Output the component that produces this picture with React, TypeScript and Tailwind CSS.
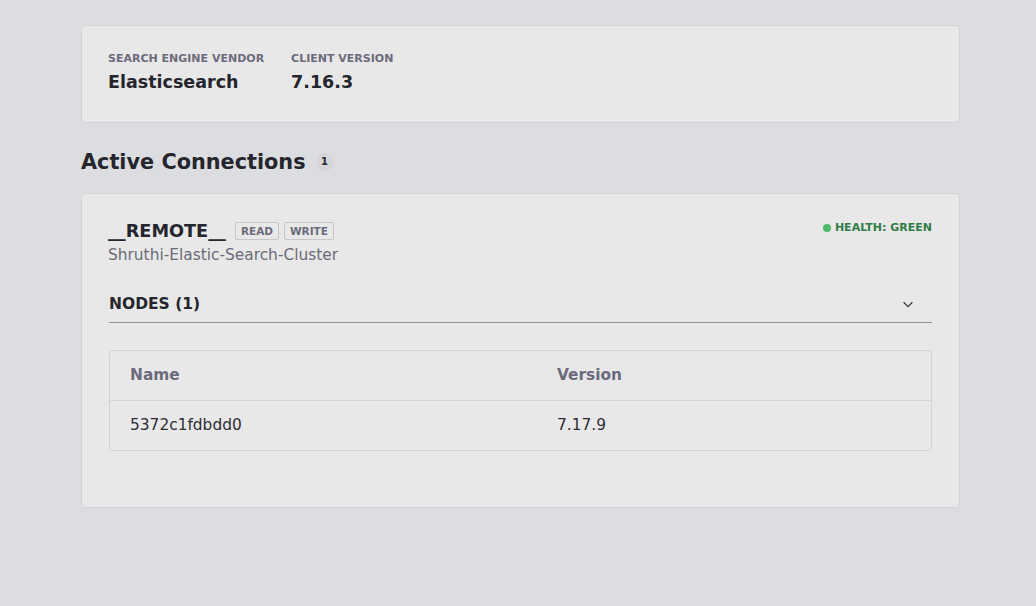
import React from "react";

export default function App() {
  return (
    <div
      className="min-h-[606px] w-full bg-[#dcdde0] text-[#25252d]"
      style={{ fontFamily: '"DejaVu Sans", "Liberation Sans", sans-serif' }}
    >
      <div className="ml-[81px] w-[879px] pt-[25px]">
        <div className="rounded border border-[#d3d3d6] bg-[#e8e8e8] px-[26px] pt-[26px] pb-[28px]">
          <div className="flex gap-[27px]">
            <div>
              <div className="text-[11px] font-bold uppercase leading-[14px] text-[#6b6b7c]">Search Engine Vendor</div>
              <div className="mt-[4px] text-[17.5px] font-bold leading-[24px]">Elasticsearch</div>
            </div>
            <div>
              <div className="text-[11px] font-bold uppercase leading-[14px] text-[#6b6b7c]">Client Version</div>
              <div className="mt-[4px] text-[17.5px] font-bold leading-[24px]">7.16.3</div>
            </div>
          </div>
        </div>

        <div className="mt-[25px] flex items-center gap-[10px]">
          <h2 className="text-[20.8px] font-bold leading-[28px]">Active Connections</h2>
          <span className="flex h-[18px] min-w-[18px] items-center justify-center rounded-full bg-[#d6d6da] px-[5px] text-[10px] font-bold leading-none">1</span>
        </div>

        <div className="mt-[17px] rounded border border-[#d3d3d6] bg-[#e8e8e8] pl-[27px] pr-[27px] pt-[25px] pb-[56px]">
          <div className="flex items-start justify-between">
            <div className="-ml-[1px]">
              <div className="flex items-center gap-[9px]">
                <span className="text-[17.7px] font-bold leading-[24px]">__REMOTE__</span>
                <div className="flex gap-[5px]">
                  <span className="rounded-[2px] border border-[#c5c5cb] px-[5px] py-[1px] text-[10.5px] font-bold leading-[14px] text-[#6b6b7c]">READ</span>
                  <span className="rounded-[2px] border border-[#c5c5cb] px-[5px] py-[1px] text-[10.5px] font-bold leading-[14px] text-[#6b6b7c]">WRITE</span>
                </div>
              </div>
              <div className="mt-[2px] text-[15.4px] leading-[20px] text-[#6b6b78]">Shruthi-Elastic-Search-Cluster</div>
            </div>
            <div className="mt-[2px] flex items-center gap-[4px]">
              <span className="h-[8px] w-[8px] rounded-full bg-[#4cbb6c]"></span>
              <span className="text-[11px] font-bold leading-[14px] text-[#2e7d46]">HEALTH: GREEN</span>
            </div>
          </div>

          <div className="mt-[29px] flex items-center justify-between border-b border-[#8e8e9e] pb-[8px] pr-[17px]">
            <span className="text-[15.5px] font-bold leading-[20px]">NODES (1)</span>
            <svg width="14" height="14" viewBox="0 0 16 16" fill="none" stroke="#3a3a44" strokeWidth="1.4">
              <path d="M3 6l5 5 5-5" />
            </svg>
          </div>

          <div className="mt-[27px] overflow-hidden rounded border border-[#d3d3d6]">
            <div className="flex h-[50px] items-center border-b border-[#d3d3d6] text-[15.4px] font-bold text-[#6b6b7c]">
              <div className="w-[447px] pl-[20px]">Name</div>
              <div>Version</div>
            </div>
            <div className="flex h-[49px] items-center text-[15.4px] text-[#2e2e36]">
              <div className="w-[447px] pl-[20px]">5372c1fdbdd0</div>
              <div>7.17.9</div>
            </div>
          </div>
        </div>
      </div>
    </div>
  );
}
